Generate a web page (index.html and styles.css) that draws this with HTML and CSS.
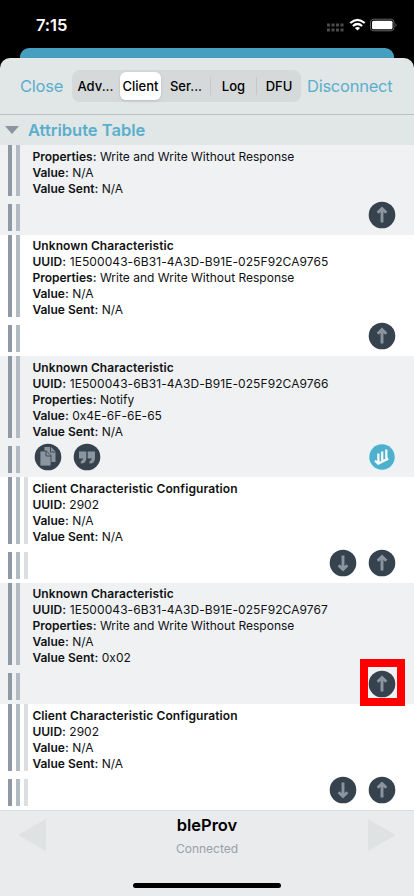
FILE: index.html
```
<!DOCTYPE html>
<html lang="en">
<head>
<meta charset="utf-8">
<title>bleProv</title>
<link rel="stylesheet" href="styles.css">
</head>
<body>
<svg class="defs" width="0" height="0">
  <symbol id="up" viewBox="0 0 28 28"><circle cx="14" cy="14" r="13.3" fill="#36424d"/><path d="M14 21.5V8.5M9.6 11.8L14 7.6l4.4 4.2" fill="none" stroke="#8a959f" stroke-width="2.9"/></symbol>
  <symbol id="down" viewBox="0 0 28 28"><circle cx="14" cy="14" r="13.3" fill="#36424d"/><path d="M14 6.5V19.5M9.6 16.2l4.4 4.2 4.4-4.2" fill="none" stroke="#8a959f" stroke-width="2.9"/></symbol>
  <symbol id="copy" viewBox="0 0 28 28"><circle cx="14" cy="14" r="13.3" fill="#36424d"/><path d="M10.5 4h6.5l4.5 4.5V19h-11z" fill="#8a959f"/><path d="M16.5 4v5h5" fill="none" stroke="#36424d" stroke-width=".9"/><path d="M6 8h6.5l4.5 4.5V23H6z" fill="#8a959f" stroke="#36424d" stroke-width=".8"/><path d="M12 8v5h5" fill="none" stroke="#36424d" stroke-width=".9"/></symbol>
  <symbol id="quote" viewBox="0 0 28 28"><circle cx="14" cy="14" r="13.3" fill="#36424d"/><path d="M6 8.500h7.300v6.500q0 5.500-5.500 5.500v-2.600q2.200-.2 2.300-2.400H6zM14.700 8.500H22v6.500q0 5.500-5.500 5.500v-2.600q2.200-.2 2.300-2.400h-4.100z" fill="#8a959f"/></symbol>
  <symbol id="notify" viewBox="0 0 28 28"><circle cx="14" cy="14" r="14" fill="#e3f4fa"/><circle cx="14" cy="14" r="12.7" fill="#4fb0cd"/><path d="M10.4 10.5v9.5M14.2 8.5v9M18.3 6.5v8.7M7 17.7l3.2 2.9 10-5" fill="none" stroke="#f4fbfd" stroke-width="2.3"/></symbol>
</svg>
<div class="screen">
  <header class="status">
    <span class="time">7:15</span>
    <svg class="signals" width="72" height="16" viewBox="0 0 72 16">
      <g fill="#4a4a4a"><path d="M1 6.5h3v3H1zM5.5 6.5h3v3h-3zM10 6.5h3v3h-3zM14.5 6.5h3v3h-3zM1 11.5h3v3H1zM5.5 11.5h3v3h-3zM10 11.5h3v3h-3zM14.5 11.5h3v3h-3z"/></g>
      <g fill="none" stroke="#fff" stroke-width="2.2"><path d="M24.3 6q7.2-6.4 14.4 0M26.9 9q4.6-4 9.2 0"/></g>
      <path d="M28.9 10.9q2.6-2 5.2 0L31.5 13.6z" fill="#fff"/>
      <rect x="44.5" y="2.2" width="23.5" height="11.6" rx="3" fill="none" stroke="#666"/>
      <rect x="46" y="3.7" width="20.5" height="8.6" rx="1.5" fill="#fff"/>
      <path d="M69.5 6q2 2 0 4z" fill="#666"/>
    </svg>
  </header>
  <div class="back-sheet"></div>
  <main class="sheet">
    <nav class="toolbar">
      <span class="close">Close</span>
      <div class="segments"><span>Adv...</span><span class="active">Client</span><span>Ser...</span><span class="ruled">Log</span><span class="ruled">DFU</span></div>
      <span class="disconnect">Disconnect</span>
    </nav>
    <div class="section"><svg width="14" height="8" viewBox="0 0 14 8"><path d="M0 0h14L7 8z" fill="#8b949f"/></svg><h2>Attribute Table</h2></div>

    <section class="row shade first">
      <div class="info"><i class="bars"></i><div class="text"><p><b>Properties:</b> Write and Write Without Response</p><p><b>Value:</b> N/A</p><p><b>Value Sent:</b> N/A</p></div></div>
      <div class="actions"><i class="bars"></i><svg class="btn right"><use href="#up"/></svg></div>
    </section>
    <section class="row tall">
      <div class="info"><i class="bars"></i><div class="text"><p class="name">Unknown Characteristic</p><p class="uuid"><b>UUID:</b> 1E500043-6B31-4A3D-B91E-025F92CA9765</p><p><b>Properties:</b> Write and Write Without Response</p><p><b>Value:</b> N/A</p><p><b>Value Sent:</b> N/A</p></div></div>
      <div class="actions"><i class="bars"></i><svg class="btn right"><use href="#up"/></svg></div>
    </section>
    <section class="row shade medium">
      <div class="info"><i class="bars"></i><div class="text"><p class="name">Unknown Characteristic</p><p class="uuid"><b>UUID:</b> 1E500043-6B31-4A3D-B91E-025F92CA9766</p><p><b>Properties:</b> Notify</p><p><b>Value:</b> 0x4E-6F-6E-65</p><p><b>Value Sent:</b> N/A</p></div></div>
      <div class="actions"><i class="bars"></i><svg class="btn copy"><use href="#copy"/></svg><svg class="btn"><use href="#quote"/></svg><svg class="btn right"><use href="#notify"/></svg></div>
    </section>
    <section class="row short nested">
      <div class="info"><i class="bars"></i><div class="text"><p class="name config">Client Characteristic Configuration</p><p><b>UUID:</b> 2902</p><p><b>Value:</b> N/A</p><p><b>Value Sent:</b> N/A</p></div></div>
      <div class="actions"><i class="bars"></i><svg class="btn right"><use href="#down"/></svg><svg class="btn"><use href="#up"/></svg></div>
    </section>
    <section class="row shade tall">
      <div class="info"><i class="bars"></i><div class="text"><p class="name">Unknown Characteristic</p><p class="uuid"><b>UUID:</b> 1E500043-6B31-4A3D-B91E-025F92CA9767</p><p><b>Properties:</b> Write and Write Without Response</p><p><b>Value:</b> N/A</p><p><b>Value Sent:</b> 0x02</p></div></div>
      <div class="actions"><i class="bars"></i><svg class="btn right"><use href="#up"/></svg><div class="highlight"></div></div>
    </section>
    <section class="row last nested">
      <div class="info"><i class="bars"></i><div class="text"><p class="name config">Client Characteristic Configuration</p><p><b>UUID:</b> 2902</p><p><b>Value:</b> N/A</p><p><b>Value Sent:</b> N/A</p></div></div>
      <div class="actions"><i class="bars"></i><svg class="btn right"><use href="#down"/></svg><svg class="btn"><use href="#up"/></svg></div>
    </section>
    <footer class="footer">
      <svg width="28" height="32" viewBox="0 0 28 32"><path d="M28 0v32L0 16z" fill="#dfe2e3"/></svg>
      <div class="device"><strong>bleProv</strong><span>Connected</span></div>
      <svg width="28" height="32" viewBox="0 0 28 32"><path d="M0 0v32l28-16z" fill="#dfe2e3"/></svg>
      <div class="home"></div>
    </footer>
  </main>
</div>
</body>
</html>
```
FILE: styles.css
```
* { box-sizing: border-box; }
body { margin: 0; background: #000; font-family: Inter, "Liberation Sans", sans-serif; color: #101214; }
p, h2 { margin: 0; }
.defs { position: absolute; }
.screen { width: 414px; height: 896px; overflow: hidden; background: #000; }
.status { height: 48px; padding: 17px 16px 0 36px; display: flex; justify-content: space-between; align-items: flex-start; }
.time { font-size: 16.5px; font-weight: 600; line-height: 17px; letter-spacing: -0.1px; color: #fff; }
.signals { display: block; }
.back-sheet { height: 10px; margin: 0 20px; background: #469fbe; border-radius: 9px 9px 0 0; }
.sheet { height: 838px; background: #e1e6e7; border-radius: 10px 10px 0 0; overflow: hidden; }
.toolbar { height: 57px; display: flex; align-items: center; padding-left: 20px; border-bottom: 1px solid #bcc2c4; color: #5aafcc; font-size: 16.5px; letter-spacing: -0.25px; white-space: nowrap; }
.close { width: 52px; }
.segments { width: 229px; height: 32px; display: grid; grid-template-columns: 47px 43px 48px 46px 45px; align-items: center; background: #d5d9da; border-radius: 8px; color: #000; font-size: 13px; font-weight: 500; letter-spacing: 0; text-align: center; }
.segments span { line-height: 18px; }
.segments .active { height: 28px; line-height: 28px; margin: 0 1px; background: #fff; border-radius: 6px; box-shadow: 0 1px 3px #0002; }
.ruled { border-left: 1px solid #c5c9cc; }
.disconnect { margin-left: 6px; }
.section { height: 30px; display: flex; align-items: center; gap: 9px; padding-left: 5px; color: #5aafcc; }
.section h2 { font-size: 16.5px; font-weight: 600; line-height: 20px; }
.row { display: flex; flex-direction: column; background: #fff; font-size: 12px; line-height: 16px; letter-spacing: 0.01px; white-space: nowrap; }
.shade { background: #eff1f3; }
.first { height: 89.5px; }
.tall { height: 121.5px; }
.medium { height: 121px; }
.short { height: 105.5px; }
.last { height: 106px; }
.info { flex: 1; min-height: 0; display: flex; }
.bars { flex: none; align-self: stretch; width: 32px; background: linear-gradient(90deg, transparent 8px, #8f98a5 8px 12px, transparent 12px 16px, #b2bac2 16px 20px, transparent 20px); }
.nested .bars { background: linear-gradient(90deg, transparent 8px, #8f98a5 8px 12px, transparent 12px 16px, #b2bac2 16px 20px, transparent 20px 24px, #dbdfe1 24px 28px, transparent 28px); }
.text { padding: 4px 0 0 0.4px; }
.tall .text { padding-top: 3.4px; }
.text b, .name { font-weight: 600; }
.name { letter-spacing: 0.08px; }
.config { letter-spacing: 0.11px; }
.uuid { letter-spacing: 0.08px; }
.actions { flex: none; position: relative; height: 27px; margin: 8px 0 4px; display: flex; align-items: flex-start; gap: 11px; padding-right: 18px; }
.btn { flex: none; width: 28px; height: 28px; margin-top: -2.7px; }
.btn.copy { margin-left: -9.5px; }
.btn.right { margin-left: auto; }
.highlight { position: absolute; left: 360px; top: -14px; width: 45px; height: 47px; border: 8px solid #f00; }
.footer { position: relative; height: 86px; border-top: 1px solid #dadddf; background: #e9ebec; display: flex; justify-content: space-between; align-items: flex-start; padding: 8px 18px 0; }
.device { display: flex; flex-direction: column; align-items: center; margin-top: -4px; }
.device strong { font-size: 16.5px; font-weight: 600; line-height: 20px; color: #000; }
.device span { margin-top: 6px; font-size: 12px; line-height: 16px; color: #98a1a9; }
.home { position: absolute; left: 133px; bottom: 8px; width: 148px; height: 5px; border-radius: 3px; background: #000; }
```
